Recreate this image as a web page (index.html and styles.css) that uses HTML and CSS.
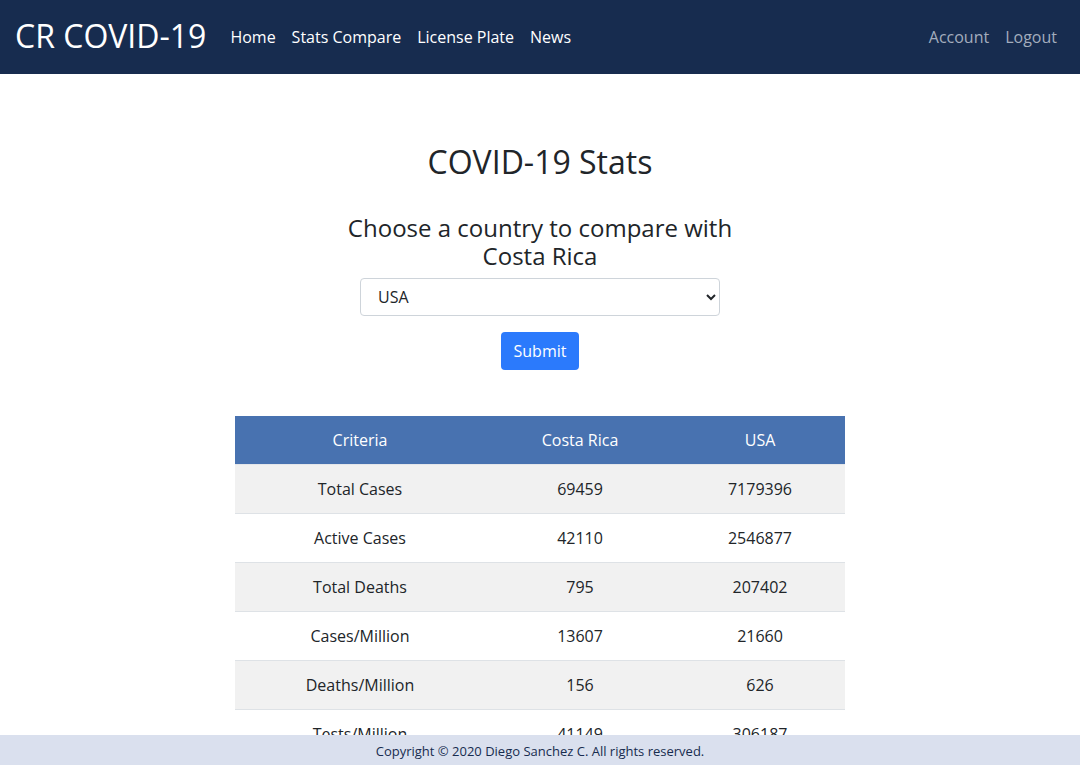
FILE: index.html
```html
<!DOCTYPE html>
<html lang="en">
<head>
<meta charset="utf-8">
<title>CR COVID-19</title>
<link rel="stylesheet" href="styles.css">
</head>
<body>
<nav class="navbar">
  <a class="brand" href="#">CR COVID-19</a>
  <ul class="nav-links">
    <li><a href="#">Home</a></li>
    <li><a href="#">Stats Compare</a></li>
    <li><a href="#">License Plate</a></li>
    <li><a href="#">News</a></li>
  </ul>
  <ul class="nav-right">
    <li><a href="#">Account</a></li>
    <li><a href="#">Logout</a></li>
  </ul>
</nav>
<main class="content">
  <h1 class="title">COVID-19 Stats</h1>
  <form class="compare-form">
    <h2 class="subtitle">Choose a country to compare with Costa Rica</h2>
    <select class="country-select">
      <option>USA</option>
    </select>
    <button type="button" class="btn-submit">Submit</button>
  </form>
  <table class="stats">
    <thead>
      <tr><th>Criteria</th><th>Costa Rica</th><th>USA</th></tr>
    </thead>
    <tbody>
      <tr><td>Total Cases</td><td>69459</td><td>7179396</td></tr>
      <tr><td>Active Cases</td><td>42110</td><td>2546877</td></tr>
      <tr><td>Total Deaths</td><td>795</td><td>207402</td></tr>
      <tr><td>Cases/Million</td><td>13607</td><td>21660</td></tr>
      <tr><td>Deaths/Million</td><td>156</td><td>626</td></tr>
      <tr><td>Tests/Million</td><td>41149</td><td>306187</td></tr>
    </tbody>
  </table>
</main>
<footer class="footer">Copyright © 2020 Diego Sanchez C. All rights reserved.</footer>
</body>
</html>
```
FILE: styles.css
```css
* { box-sizing: border-box; }
html, body { margin: 0; padding: 0; }
body {
  font-family: "Open Sans", "Noto Sans", sans-serif;
  color: #212529;
  background: #fff;
  overflow: hidden;
  height: 765px;
}
a { text-decoration: none; }
.navbar {
  height: 74px;
  background: #172c4f;
  display: flex;
  align-items: center;
  padding: 0 16px 0 15px;
}
.brand {
  color: #fff;
  font-size: 32px;
  line-height: 1;
  margin-right: 16px;
  margin-top: -2px;
}
.nav-links, .nav-right {
  list-style: none;
  margin: 0;
  padding: 0;
  display: flex;
}
.nav-links a, .nav-right a {
  display: block;
  padding: 8px 8px;
  font-size: 16px;
  font-weight: 500;
}
.nav-links a { color: #fff; }
.nav-right { margin-left: auto; margin-right: -1px; }
.nav-right a { color: #a3adbd; font-weight: 400; }
.content {
  display: flex;
  flex-direction: column;
  align-items: center;
  padding-top: 66px;
}
.title {
  margin: 0;
  font-size: 32px;
  font-weight: 400;
  line-height: 44px;
}
.compare-form {
  display: flex;
  flex-direction: column;
  align-items: center;
  margin-top: 30px;
}
.subtitle {
  margin: 0;
  width: 400px;
  text-align: center;
  font-size: 24px;
  font-weight: 400;
  line-height: 28px;
}
.country-select {
  margin-top: 8px;
  width: 360px;
  height: 38px;
  border: 1px solid #ced4da;
  border-radius: 4px;
  background: #fff;
  font-family: inherit;
  font-size: 16px;
  color: #212529;
  padding: 0 12px 0 13px;
}
.btn-submit {
  margin-top: 16px;
  width: 78px;
  height: 38px;
  border: none;
  border-radius: 4px;
  background: #2b7afc;
  color: #fff;
  font-family: inherit;
  font-size: 16px;
  cursor: pointer;
}
.stats {
  margin-top: 46px;
  width: 610px;
  border-collapse: collapse;
  font-size: 16px;
  text-align: center;
}
.stats th:nth-child(1) { width: 250px; }
.stats th:nth-child(2) { width: 190px; }
.stats th {
  background: #4872b0;
  color: #fff;
  font-weight: 400;
  height: 48px;
  padding: 0;
}
.stats td {
  height: 49px;
  padding: 1px 0 0;
  border-top: 1px solid #dee2e6;
}
.stats tbody tr:nth-child(odd) td { background: #f1f1f1; }
.stats tbody tr:first-child td { border-top: 1px solid #e4e6ea; }
.footer {
  position: fixed;
  left: 0;
  right: 0;
  bottom: 0;
  height: 30px;
  background: #dae0ee;
  color: #172c4f;
  font-size: 13px;
  display: flex;
  align-items: center;
  justify-content: center;
  padding-top: 2px;
}
```
